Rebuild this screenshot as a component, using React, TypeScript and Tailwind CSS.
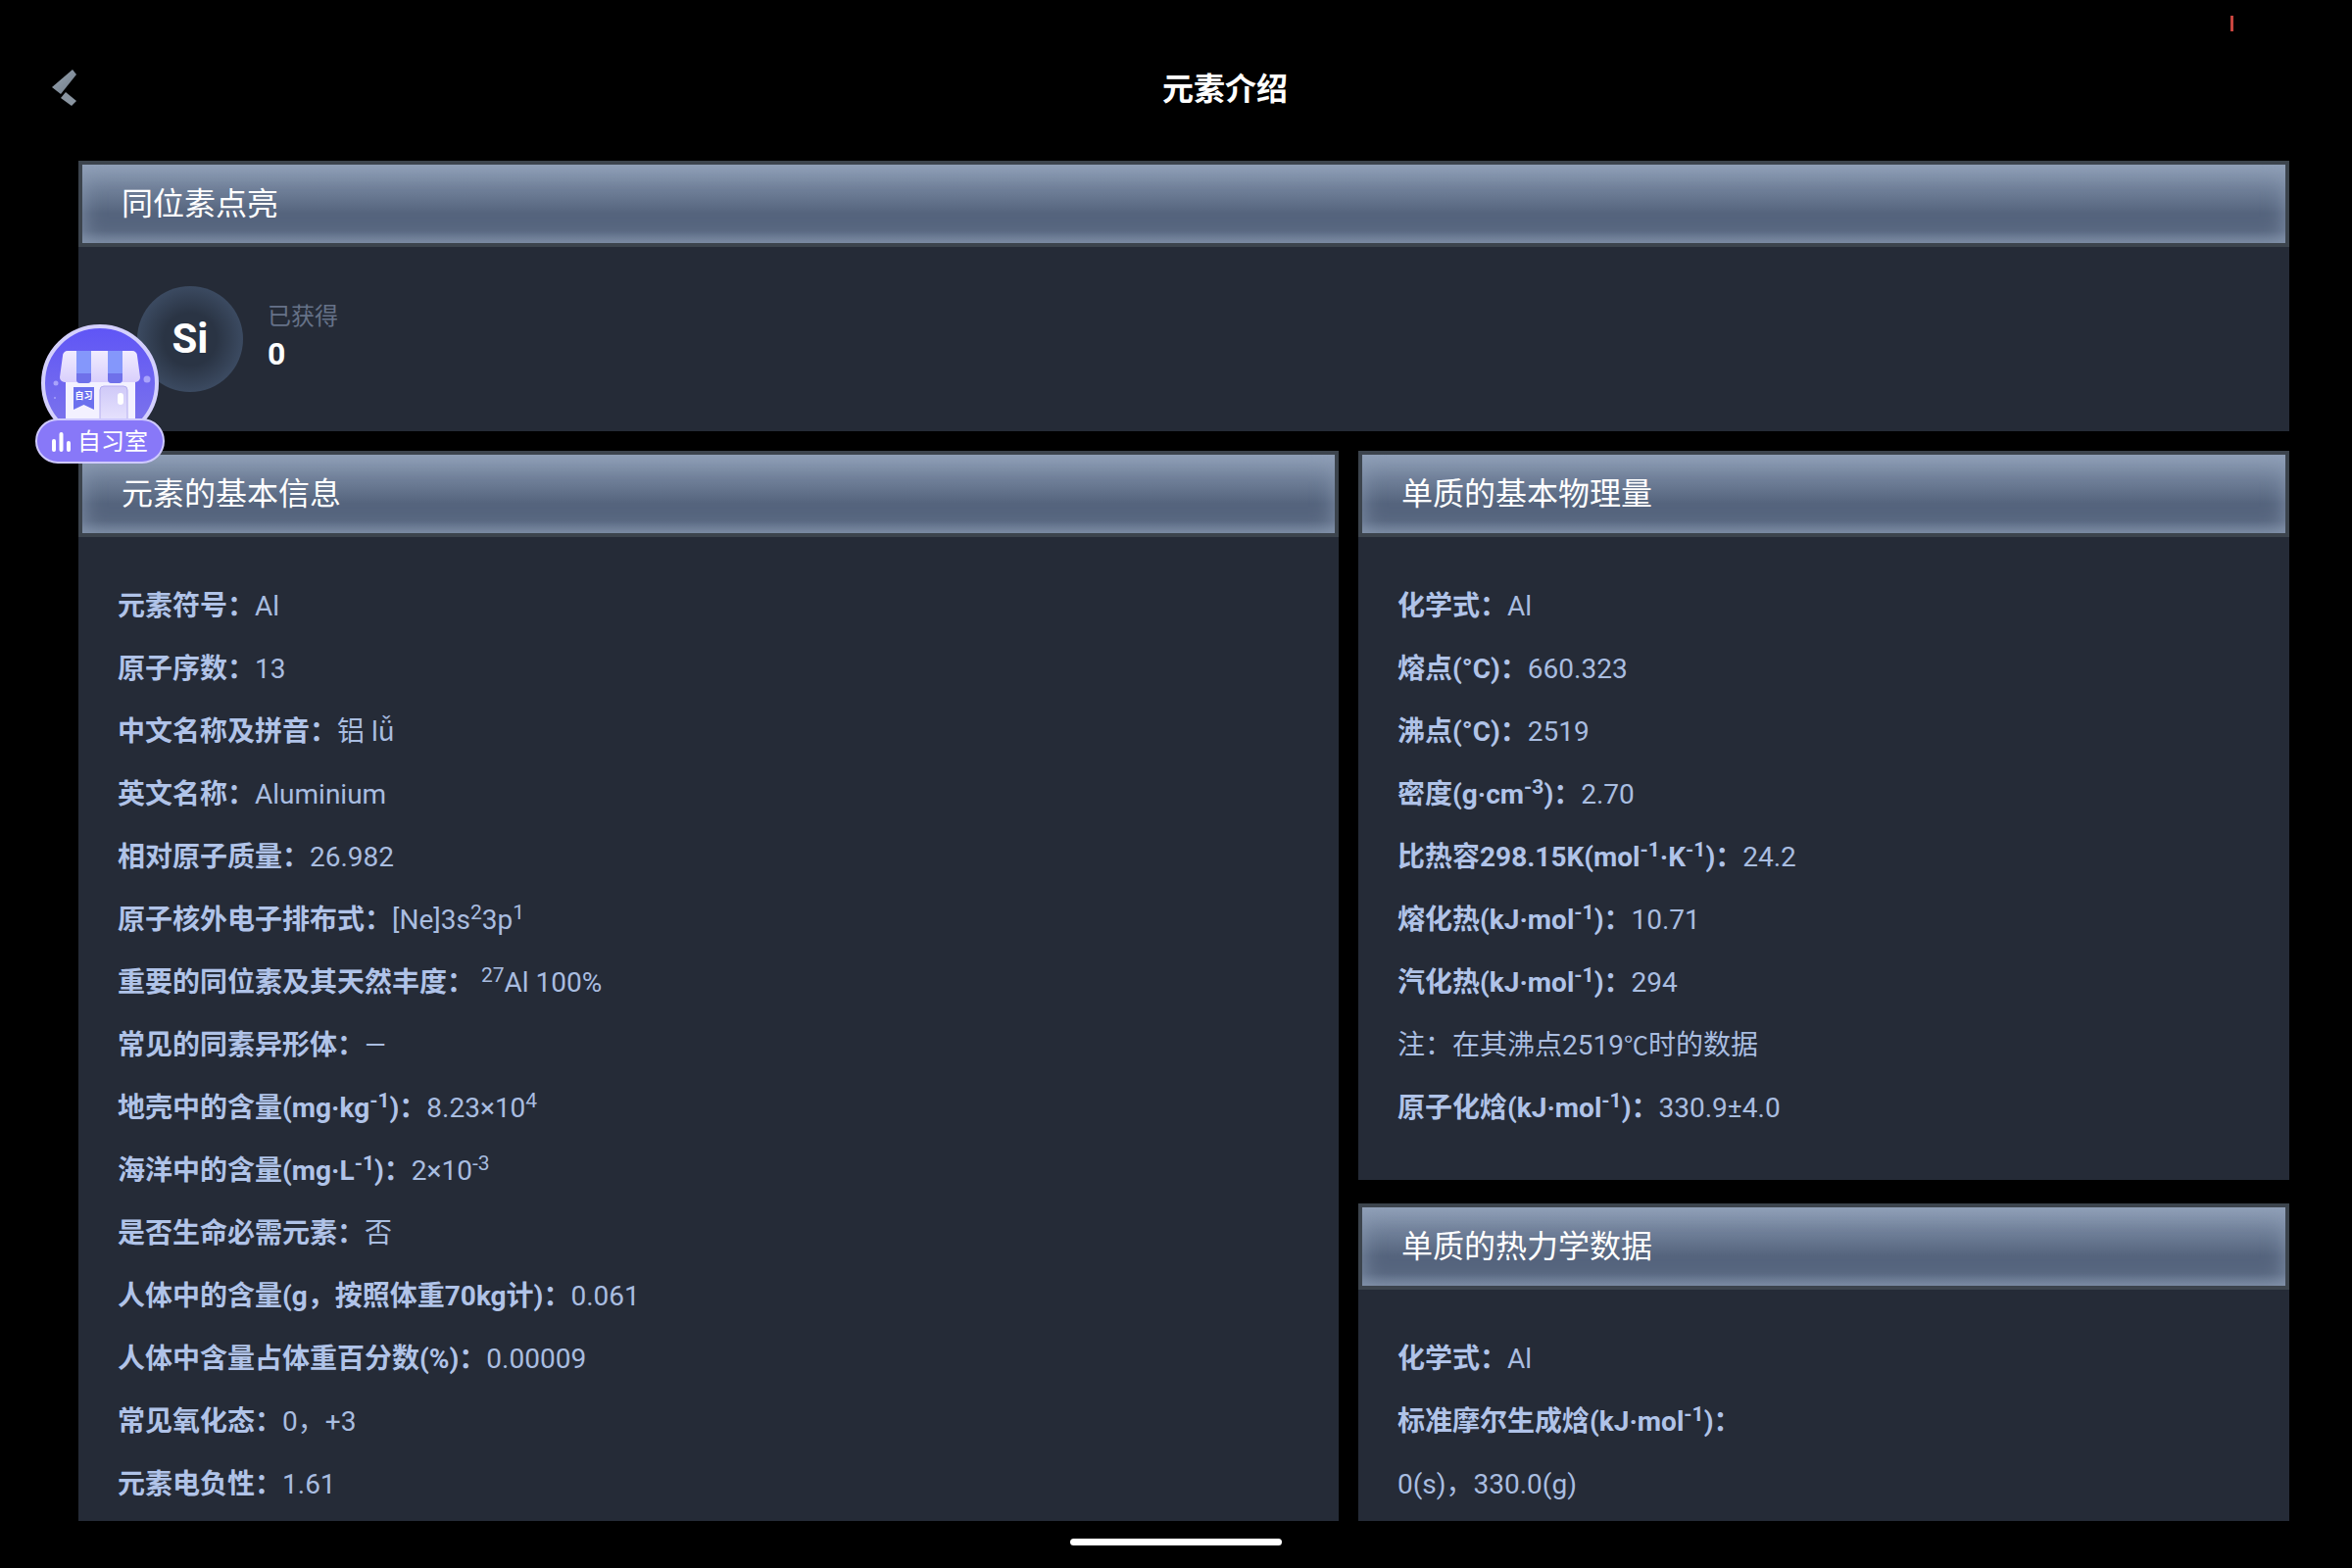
const fontStack = "[font-family:Roboto,'Noto_Sans_CJK_SC',sans-serif]";

function PanelHeader({ title }: { title: string }) {
  return (
    <div className="h-[88px] shrink-0 border-y-4 border-x-4 border-[#3c444d] bg-[linear-gradient(180deg,#8f9fb7_0%,#6f7f98_32%,#55647d_62%,#55647d_84%,#6f7f97_100%)] shadow-[inset_0_0_22px_rgba(143,159,183,0.75)] pl-10 text-[32px] leading-[80px] text-white">
      {title}
    </div>
  );
}

function Row({ label, children }: { label: React.ReactNode; children?: React.ReactNode }) {
  return (
    <div className="h-16 leading-[64px] whitespace-nowrap text-[28px] font-normal text-[#a9bde0]">
      <span className="font-bold text-[#b0c3e8]">{label}</span>
      {children}
    </div>
  );
}

function StudyBadge() {
  return (
    <div className="absolute left-9 top-[331px] h-[142px] w-[132px]">
      <svg width="120" height="120" viewBox="0 0 120 120" className="absolute left-1.5 top-0">
        <defs>
          <linearGradient id="bg" x1="0" y1="0" x2="0" y2="1">
            <stop offset="0" stopColor="#5f55f6" />
            <stop offset="1" stopColor="#8078ea" />
          </linearGradient>
          <linearGradient id="awn" x1="0" y1="0" x2="0" y2="1">
            <stop offset="0" stopColor="#f0ecff" />
            <stop offset="1" stopColor="#d9cffc" />
          </linearGradient>
          <linearGradient id="door" x1="0" y1="0" x2="0" y2="1">
            <stop offset="0" stopColor="#cfc9f8" />
            <stop offset="1" stopColor="#eeeaff" />
          </linearGradient>
        </defs>
        <circle cx="60" cy="60" r="58" fill="url(#bg)" stroke="#d4d0fd" strokeWidth="4" />
        <circle cx="15" cy="60" r="2.500" fill="#a9a3fb" />
        <circle cx="108" cy="56" r="3.500" fill="#a9a3fb" />
        <circle cx="14" cy="75" r="1" fill="#a9a3fb" />
        <rect x="25" y="59" width="71" height="50" fill="#f3f1ff" />
        <path d="M33 64h21v23l-10.500-5-10.500 5z" fill="#6b70ee" />
        <text x="43.500" y="76" textAnchor="middle" fontSize="9" fontWeight="700" fill="#ffffff">自习</text>
        <rect x="60" y="63" width="28" height="46" rx="4" fill="url(#door)" stroke="#b5aef0" />
        <rect x="78" y="70" width="6" height="12" rx="3" fill="#ffffff" />
        <path d="M27 27h66a5 5 0 0 1 5 5l3 22a5 5 0 0 1-5 5H24a5 5 0 0 1-5-5l3-22a5 5 0 0 1 5-5z" fill="url(#awn)" />
        <path d="M36 27h15v29a4 4 0 0 1-4 4h-7a4 4 0 0 1-4-4z" fill="#8497fb" />
        <path d="M68 27h15v29a4 4 0 0 1-4 4h-7a4 4 0 0 1-4-4z" fill="#8497fb" />
        <path d="M36 50h15v6a4 4 0 0 1-4 4h-7a4 4 0 0 1-4-4z" fill="#6a68e6" opacity="0.8" />
        <path d="M68 50h15v6a4 4 0 0 1-4 4h-7a4 4 0 0 1-4-4z" fill="#6a68e6" opacity="0.8" />
      </svg>
      <div className="absolute bottom-0 left-0 flex h-[46px] w-[132px] items-center justify-center gap-[7px] rounded-[23px] border-2 border-[#cfcaff] bg-[#8878f8] pt-0.5 text-[24px] text-white">
        <svg width="19" height="20" viewBox="0 0 19 20">
          <rect x="0" y="7" width="4" height="13" rx="2" fill="#fff" />
          <rect x="7.500" y="0" width="4" height="20" rx="2" fill="#fff" />
          <rect x="15" y="9" width="4" height="11" rx="2" fill="#fff" />
        </svg>
        <span>自习室</span>
      </div>
    </div>
  );
}

export default function App() {
  return (
    <div className={`relative h-[1600px] w-[2400px] overflow-hidden bg-black ${fontStack}`}>
      {/* red tick top right */}
      <div className="absolute left-[2276px] top-4 h-4 w-[3px] bg-[#c8453f]" />

      <header className="relative flex h-[164px] items-start justify-center pt-[67px] pl-[100px]">
        <svg width="26" height="38" viewBox="0 0 26 38" className="absolute left-[53px] top-[71px]">
          <defs>
            <linearGradient id="chev" x1="0" y1="0" x2="1" y2="1">
              <stop offset="0" stopColor="#9aa6b3" />
              <stop offset="1" stopColor="#6f7b88" />
            </linearGradient>
          </defs>
          <path d="M0 18L21 0l4 5L9 25z" fill="url(#chev)" />
          <path d="M9 29l5-6 11 9-5 5z" fill="#8a95a1" />
        </svg>
        <h1 className="text-[32px] leading-[48px] font-bold text-white">元素介绍</h1>
      </header>

      <main className="ml-20 flex h-[1388px] w-[2256px] flex-col gap-5">
        <section className="h-[276px] shrink-0 bg-[#252b37]">
          <PanelHeader title="同位素点亮" />
          <div className="flex items-center pt-10 pl-[60px]">
            <div className="flex h-[108px] w-[108px] items-center justify-center rounded-full bg-[radial-gradient(circle,#2a3444_35%,#3c4b62_72%,#6a7d99_100%)] pb-0.5 text-[42px] font-bold text-white">
              Si
            </div>
            <div className="ml-[25px] -mt-1.5">
              <div className="text-[24px] leading-[36px] text-[#667288]">已获得</div>
              <div className="text-[32px] leading-[40px] font-bold text-white">0</div>
            </div>
          </div>
        </section>

        <div className="grid min-h-0 flex-1 grid-cols-[1286px_950px] gap-5">
          <section className="flex min-h-0 flex-col overflow-hidden bg-[#252b37]">
            <PanelHeader title="元素的基本信息" />
            <div className="pl-10 pt-[39px]">
              <Row label="元素符号：">Al</Row>
              <Row label="原子序数：">13</Row>
              <Row label="中文名称及拼音：">铝 lǚ</Row>
              <Row label="英文名称：">Aluminium</Row>
              <Row label="相对原子质量：">26.982</Row>
              <Row label="原子核外电子排布式：">[Ne]3s<sup>2</sup>3p<sup>1</sup></Row>
              <Row label="重要的同位素及其天然丰度："> <sup>27</sup>Al 100%</Row>
              <Row label="常见的同素异形体：">—</Row>
              <Row label={<>地壳中的含量(mg·kg<sup>-1</sup>)：</>}>8.23×10<sup>4</sup></Row>
              <Row label={<>海洋中的含量(mg·L<sup>-1</sup>)：</>}>2×10<sup>-3</sup></Row>
              <Row label="是否生命必需元素：">否</Row>
              <Row label="人体中的含量(g，按照体重70kg计)：">0.061</Row>
              <Row label="人体中含量占体重百分数(%)：">0.00009</Row>
              <Row label="常见氧化态：">0，+3</Row>
              <Row label="元素电负性：">1.61</Row>
            </div>
          </section>

          <div className="flex min-h-0 flex-col gap-6">
            <section className="h-[744px] shrink-0 bg-[#252b37]">
              <PanelHeader title="单质的基本物理量" />
              <div className="pl-10 pt-[39px]">
                <Row label="化学式：">Al</Row>
                <Row label="熔点(°C)：">660.323</Row>
                <Row label="沸点(°C)：">2519</Row>
                <Row label={<>密度(g·cm<sup>-3</sup>)：</>}>2.70</Row>
                <Row label={<>比热容298.15K(mol<sup>-1</sup>·K<sup>-1</sup>)：</>}>24.2</Row>
                <Row label={<>熔化热(kJ·mol<sup>-1</sup>)：</>}>10.71</Row>
                <Row label={<>汽化热(kJ·mol<sup>-1</sup>)：</>}>294</Row>
                <Row label="">注：在其沸点2519<span className="text-[25px] leading-none">℃</span>时的数据</Row>
                <Row label={<>原子化焓(kJ·mol<sup>-1</sup>)：</>}>330.9±4.0</Row>
              </div>
            </section>
            <section className="min-h-0 flex-1 overflow-hidden bg-[#252b37]">
              <PanelHeader title="单质的热力学数据" />
              <div className="pl-10 pt-[39px]">
                <Row label="化学式：">Al</Row>
                <Row label={<>标准摩尔生成焓(kJ·mol<sup>-1</sup>)：</>} />
                <Row label="">0(s)，330.0(g)</Row>
              </div>
            </section>
          </div>
        </div>
      </main>

      <StudyBadge />

      {/* home indicator */}
      <div className="absolute left-[1092px] top-[1570px] h-[7px] w-[216px] rounded-full bg-white" />
    </div>
  );
}
